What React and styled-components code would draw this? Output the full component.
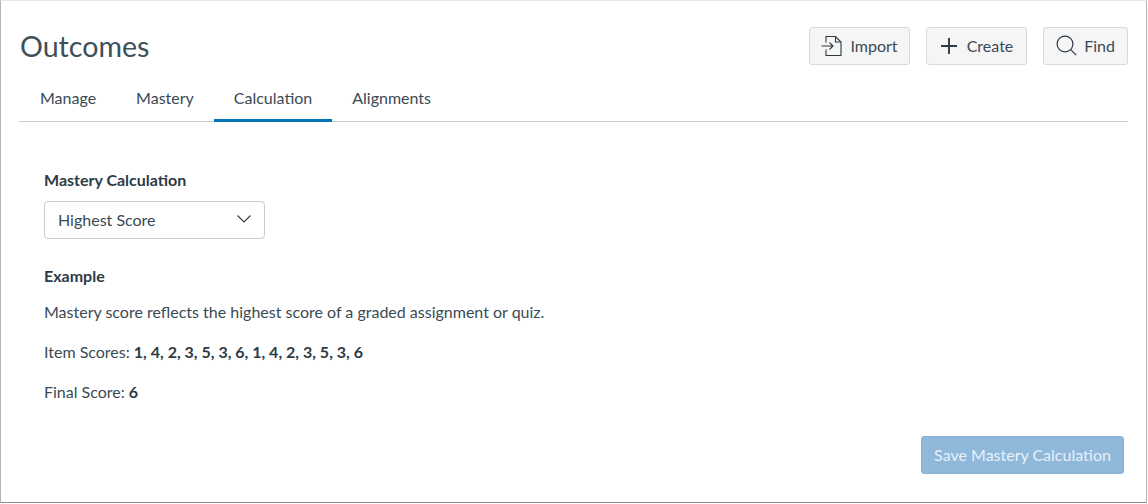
import styled, { createGlobalStyle } from "styled-components";

const GlobalStyle = createGlobalStyle`
  html, body {
    margin: 0;
    padding: 0;
    background: #ffffff;
  }

  body {
    font-family: Lato, "Noto Sans", sans-serif;
    color: #2d3b45;
  }
`;

const tabs = ["Manage", "Mastery", "Calculation", "Alignments"];

function ImportIcon() {
  return (
    <svg width="22" height="22" viewBox="0 0 22 22" fill="none" stroke="#2d3b45" strokeWidth="1.1">
      <path d="M5 7.5V1.5h9.5L20 7v13.5H5v-6" />
      <path d="M14.5 1.5V7H20" />
      <path d="M0.5 11h11.5M8.5 7.5L12 11l-3.5 3.5" />
    </svg>
  );
}

function PlusIcon() {
  return (
    <svg width="18" height="18" viewBox="0 0 18 18" fill="none" stroke="#2d3b45" strokeWidth="1.9">
      <path d="M9 1v16M1 9h16" />
    </svg>
  );
}

function SearchIcon() {
  return (
    <svg width="21" height="21" viewBox="0 0 21 21" fill="none" stroke="#2d3b45" strokeWidth="1.2">
      <circle cx="9" cy="9" r="7.9" />
      <path d="M14.7 14.7L20.2 20.2" />
    </svg>
  );
}

function ChevronIcon() {
  return (
    <svg width="14" height="8" viewBox="0 0 14 8" fill="none" stroke="#2d3b45" strokeWidth="1.1">
      <path d="M0.5 0.5L7 7l6.5-6.5" />
    </svg>
  );
}

export default function App() {
  return (
    <>
      <GlobalStyle />
      <Frame>
        <Header>
          <Title>Outcomes</Title>
          <Actions>
            <ActionButton $width={101} $gap={7}>
              <ImportIcon />
              Import
            </ActionButton>
            <ActionButton $width={101} $gap={9}>
              <PlusIcon />
              Create
            </ActionButton>
            <ActionButton $width={85} $gap={7}>
              <SearchIcon />
              Find
            </ActionButton>
          </Actions>
        </Header>
        <TabBar>
          {tabs.map(tab => (
            <Tab key={tab} $active={tab === "Calculation"}>
              {tab}
            </Tab>
          ))}
        </TabBar>
        <Content>
          <FieldLabel>Mastery Calculation</FieldLabel>
          <Select>
            Highest Score
            <ChevronIcon />
          </Select>
          <ExampleTitle>Example</ExampleTitle>
          <Line>Mastery score reflects the highest score of a graded assignment or quiz.</Line>
          <Line>
            Item Scores: <b>1, 4, 2, 3, 5, 3, 6, 1, 4, 2, 3, 5, 3, 6</b>
          </Line>
          <Line>
            Final Score: <b>6</b>
          </Line>
          <Footer>
            <SaveButton disabled>Save Mastery Calculation</SaveButton>
          </Footer>
        </Content>
      </Frame>
    </>
  );
}

const Frame = styled.div`
  box-sizing: border-box;
  width: 1147px;
  height: 503px;
  padding: 26px 18px 0 18px;
  background: #ffffff;
  border-top: 1px solid #e8e8e8;
  border-left: 1px solid #b4b4b4;
  border-right: 1px solid #b4b4b4;
  border-bottom: 1px solid #8a8a8a;
`;

const Header = styled.header`
  display: flex;
  align-items: center;
  justify-content: space-between;
  height: 38px;
  padding-left: 1px;
`;

const Title = styled.h1`
  margin: 0;
  font-size: 28.6px;
  font-weight: 400;
  line-height: 38px;
  color: #3d4f5b;
`;

const Actions = styled.div`
  display: flex;
  gap: 16px;
`;

const ActionButton = styled.button`
  box-sizing: border-box;
  display: flex;
  align-items: center;
  justify-content: center;
  gap: ${props => props.$gap}px;
  width: ${props => props.$width}px;
  height: 38px;
  padding: 0 0 1px;
  font-family: inherit;
  font-size: 16px;
  color: #3a4a55;
  background: #f5f5f5;
  border: 1px solid #d7dadd;
  border-radius: 3px;
`;

const TabBar = styled.nav`
  display: flex;
  height: 38px;
  margin-top: 18px;
  padding-left: 1px;
  border-bottom: 1px solid #c7cdd1;
`;

const Tab = styled.div`
  box-sizing: border-box;
  height: 39px;
  padding: 3px 20px 0;
  font-size: 16px;
  line-height: 24px;
  color: #3a4a55;
  border-bottom: 3px solid ${props => (props.$active ? "#0374b5" : "transparent")};
`;

const Content = styled.main`
  padding: 48px 4px 0 25px;
  color: #3a4a55;

  & b {
    color: #2d3b45;
  }
`;

const FieldLabel = styled.div`
  font-size: 16px;
  font-weight: 700;
  line-height: 20px;
  color: #2d3b45;
`;

const Select = styled.div`
  box-sizing: border-box;
  display: flex;
  align-items: center;
  justify-content: space-between;
  width: 221px;
  height: 38px;
  margin-top: 11px;
  padding: 0 13px 2px;
  font-size: 16px;
  background: #ffffff;
  border: 1px solid #c7cdd1;
  border-radius: 4px;
`;

const ExampleTitle = styled.div`
  margin-top: 27px;
  font-size: 16px;
  font-weight: 700;
  line-height: 20px;
  color: #2d3b45;
`;

const Line = styled.p`
  margin: 16px 0 0;
  font-size: 16px;
  line-height: 20px;

  & + & {
    margin-top: 20px;
  }
`;

const Footer = styled.div`
  display: flex;
  justify-content: flex-end;
  margin-top: 34px;
`;

const SaveButton = styled.button`
  box-sizing: border-box;
  width: 203px;
  height: 38px;
  padding: 0 0 2px;
  font-family: inherit;
  font-size: 16px;
  color: #e8f0f7;
  background: #8fb8db;
  border: 1px solid #87b2d6;
  border-radius: 3px;
`;
